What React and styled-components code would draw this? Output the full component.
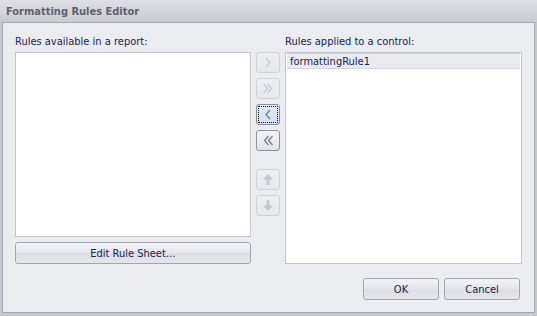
import React from 'react';
import styled, { createGlobalStyle } from 'styled-components';

const Global = createGlobalStyle`
  html, body { margin: 0; padding: 0; }
  body {
    width: 537px;
    height: 316px;
    overflow: hidden;
    font-family: "DejaVu Sans Condensed", "DejaVu Sans", sans-serif;
    font-stretch: condensed;
    font-size: 11px;
    color: #20234f;
  }
`;

const Window = styled.div`
  width: 537px;
  height: 316px;
  display: flex;
  flex-direction: column;
  background: #c6c8d0;
  box-sizing: border-box;
`;

const TitleBar = styled.div`
  height: 22px;
  flex: none;
  display: flex;
  align-items: center;
  padding-left: 6px;
  background: linear-gradient(#dedfe4, #c9cbd2);
  color: #5e626e;
  font-weight: bold;
  font-size: 11px;
`;

const Body = styled.div`
  flex: 1;
  padding: 0 2px 3px 2px;
  display: flex;
`;

const Panel = styled.div`
  flex: 1;
  border: 1px solid #a7a9b1;
  background: #ebecf0;
  padding: 12px 12px 0 12px;
  display: flex;
  flex-direction: column;
`;

const Columns = styled.div`
  display: flex;
  gap: 5px;
`;

const Column = styled.div`
  width: ${p => p.$w}px;
  display: flex;
  flex-direction: column;
`;

const Label = styled.div`
  height: 17px;
  line-height: 13px;
  white-space: nowrap;
`;

const ListBox = styled.div`
  height: ${p => p.$h}px;
  box-sizing: border-box;
  background: #fff;
  border: 1px solid #c3c5cb;
  padding: 0 1px;
`;

const ListItem = styled.div`
  height: 16px;
  line-height: 15px;
  box-sizing: border-box;
  padding-left: 3px;
  background: #e9eaee;
  border-top: 1px solid #d4d6dc;
  border-bottom: 1px solid #d4d6dc;
`;

const Button = styled.button`
  box-sizing: border-box;
  width: ${p => p.$w}px;
  height: 22px;
  margin: 0;
  padding: 0;
  border: 1px solid #a3a5ad;
  border-radius: 3px;
  background: linear-gradient(#f3f4f6, #e3e5ea 50%, #dcdee3 51%, #e5e6ea);
  font-family: inherit;
  font-stretch: condensed;
  font-size: 11px;
  color: #20234f;
  display: flex;
  align-items: center;
  justify-content: center;
`;

const WideButton = styled(Button)`
  margin-top: 5px;
`;

const NavColumn = styled.div`
  width: 24px;
  padding-top: 17px;
  display: flex;
  flex-direction: column;
  gap: 5px;
`;

const NavButton = styled.div`
  box-sizing: border-box;
  flex: none;
  width: 24px;
  height: 21px;
  margin-top: ${p => (p.$gap ? 13 : 0)}px;
  border: 1px solid ${p => (p.$disabled ? '#cfd1d6' : '#8f929c')};
  border-radius: 3px;
  background: ${p =>
    p.$focus
      ? 'linear-gradient(#e3e8f8, #d6ddf4)'
      : p.$disabled
      ? 'linear-gradient(#eeeff2, #e6e7eb)'
      : 'linear-gradient(#f3f4f6, #e1e3e8)'};
  color: ${p => (p.$disabled ? '#c6c8ce' : '#767a85')};
  display: flex;
  align-items: center;
  justify-content: center;
  position: relative;
  &::after {
    content: '';
    display: ${p => (p.$focus ? 'block' : 'none')};
    position: absolute;
    inset: 1px;
    border: 1px dotted #1a1a1a;
    border-radius: 1px;
  }
`;

const Footer = styled.div`
  display: flex;
  justify-content: flex-end;
  gap: 5px;
  padding: 14px 2px 0 0;
`;

const Chevron = ({ dir = 'right', double }) => {
  const single = dir === 'right' ? 'M8 5 L12 9.5 L8 14' : 'M12 5 L8 9.5 L12 14';
  const a = dir === 'right' ? 'M5.5 5 L9.5 9.5 L5.5 14' : 'M10.5 5 L6.5 9.5 L10.5 14';
  const b = dir === 'right' ? 'M9.5 5 L13.5 9.5 L9.5 14' : 'M14.5 5 L10.5 9.5 L14.5 14';
  return (
    <svg width="20" height="19" viewBox="0 0 20 19">
      <g fill="none" stroke="currentColor" strokeWidth="1.2">
        {double ? (
          <>
            <path d={a} />
            <path d={b} />
          </>
        ) : (
          <path d={single} />
        )}
      </g>
    </svg>
  );
};

const Arrow = ({ up }) => (
  <svg width="20" height="19" viewBox="0 0 20 19">
    <g transform={up ? undefined : 'rotate(180 10 9.5)'} fill="currentColor">
      <path d="M10 4 L15 9.5 L11.5 9.5 L11.5 15 L8.5 15 L8.5 9.5 L5 9.5 Z" />
    </g>
  </svg>
);

export default function App() {
  return (
    <Window>
      <Global />
      <TitleBar>Formatting Rules Editor</TitleBar>
      <Body>
        <Panel>
          <Columns>
            <Column $w={236}>
              <Label>Rules available in a report:</Label>
              <ListBox $h={185} />
              <WideButton $w={236}>Edit Rule Sheet…</WideButton>
            </Column>
            <NavColumn>
              <NavButton $disabled><Chevron dir="right" /></NavButton>
              <NavButton $disabled><Chevron dir="right" double /></NavButton>
              <NavButton $focus><Chevron dir="left" /></NavButton>
              <NavButton><Chevron dir="left" double /></NavButton>
              <NavButton $disabled $gap><Arrow up /></NavButton>
              <NavButton $disabled><Arrow /></NavButton>
            </NavColumn>
            <Column $w={237}>
              <Label>Rules applied to a control:</Label>
              <ListBox $h={212}>
                <ListItem>formattingRule1</ListItem>
              </ListBox>
            </Column>
          </Columns>
          <Footer>
            <Button $w={76}>OK</Button>
            <Button $w={76}>Cancel</Button>
          </Footer>
        </Panel>
      </Body>
    </Window>
  );
}
